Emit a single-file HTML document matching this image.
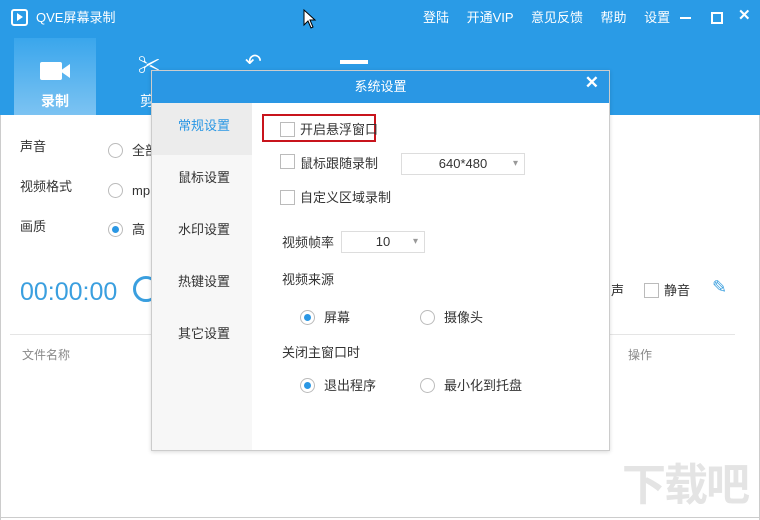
<html style="overflow:hidden"><head><style>
body{margin:0;width:760px;height:520px;overflow:hidden;font-family:"Liberation Sans","Noto Sans CJK SC",sans-serif;background:#fff;position:relative;font-size:13px;color:#333;line-height:16px}
.a{position:absolute;white-space:nowrap}
.cb{position:absolute;width:13px;height:13px;border:1px solid #bbb;background:#fff}
.rd{position:absolute;width:13px;height:13px;border:1px solid #bbb;border-radius:50%;background:#fff}
.rd.on::after{content:"";position:absolute;left:3px;top:3px;width:7px;height:7px;border-radius:50%;background:#2a97e4}
.sel{position:absolute;border:1px solid #ddd;background:#fff;height:20px;line-height:20px;text-align:center}
.sel::after{content:"▾";position:absolute;right:6px;top:0;color:#999;font-size:10px}
</style></head><body>
<div class="a" style="left:0;top:0;width:760px;height:115px;background:#2a9be6"></div>
<div class="a" style="left:14px;top:38px;width:82px;height:77px;background:linear-gradient(#3aa6ec,#7cc3f2)"></div>
<div class="a" style="left:11px;top:9px;width:13px;height:13px;border:2px solid #fff;border-radius:3px"></div>
<div class="a" style="left:17px;top:13px;width:0;height:0;border-left:6px solid #fff;border-top:4px solid transparent;border-bottom:4px solid transparent"></div>
<div class="a" style="left:36px;top:10px;color:#fff;font-size:13px">QVE屏幕录制</div>
<div class="a" style="left:423px;top:10px;color:#fff;font-size:13px;word-spacing:14px">登陆 开通VIP 意见反馈 帮助 设置</div>
<div class="a" style="left:680px;top:17px;width:11px;height:2px;background:#fff"></div>
<div class="a" style="left:711px;top:12px;width:8px;height:8px;border:2px solid #fff"></div>
<div class="a" style="left:738px;top:8px;color:#fff;font-size:15px;font-weight:bold">✕</div>
<div class="a" style="left:40px;top:62px;width:22px;height:18px;background:#fff;border-radius:2px"></div>
<div class="a" style="left:60px;top:64px;width:0;height:0;border-right:10px solid #fff;border-top:7px solid transparent;border-bottom:7px solid transparent"></div>
<div class="a" style="left:41px;top:93px;color:#fff;font-size:14px;font-weight:bold">录制</div>
<div class="a" style="left:138px;top:58px;color:#fff;font-size:22px">✂</div>
<div class="a" style="left:140px;top:93px;color:#fff;font-size:14px">剪</div>
<div class="a" style="left:245px;top:54px;color:#fff;font-size:20px">↶</div>
<div class="a" style="left:340px;top:60px;width:28px;height:4px;background:#fff"></div>
<div class="a" style="left:20px;top:139px">声音</div><div class="rd a" style="left:108px;top:143px"></div><div class="a" style="left:132px;top:143px">全部</div>
<div class="a" style="left:20px;top:179px">视频格式</div><div class="rd a" style="left:108px;top:183px"></div><div class="a" style="left:132px;top:183px">mp</div>
<div class="a" style="left:20px;top:219px">画质</div><div class="rd on a" style="left:108px;top:222px"></div><div class="a" style="left:132px;top:222px">高</div>
<div class="a" style="left:20px;top:278px;font-size:25px;line-height:28px;color:#3a9fdf">00:00:00</div>
<div class="a" style="left:133px;top:276px;width:20px;height:20px;border:3px solid #3a9fdf;border-radius:50%"></div>
<div class="a" style="left:611px;top:283px">声</div><div class="cb" style="left:644px;top:283px"></div><div class="a" style="left:664px;top:283px">静音</div>
<div class="a" style="left:712px;top:277px;color:#3a9fdf;font-size:18px;line-height:20px">✎</div>
<div class="a" style="left:10px;top:334px;width:725px;height:1px;background:#e5e5e5"></div>
<div class="a" style="left:22px;top:347px;color:#888;font-size:12px">文件名称</div>
<div class="a" style="left:628px;top:347px;color:#888;font-size:12px">操作</div>
<div class="a" style="left:0;top:115px;width:1px;height:405px;background:#ccc"></div>
<div class="a" style="left:759px;top:115px;width:1px;height:405px;background:#ccc"></div>
<div class="a" style="left:0;top:517px;width:760px;height:1px;background:#ccc"></div>
<div class="a" style="left:622px;top:458px;font-size:44px;line-height:56px;color:#e4e4e4;font-weight:bold;letter-spacing:-2px">下载吧</div>
<div class="a" style="left:151px;top:70px;width:457px;height:379px;background:#fff;border:1px solid #ccc;box-shadow:0 1px 4px rgba(0,0,0,.15)">
<div class="a" style="left:0;top:0;width:457px;height:32px;background:#2a97e4;color:#fff;text-align:center;line-height:32px;font-size:13px">系统设置</div>
<div class="a" style="right:10px;top:4px;color:#fff;font-size:17px;font-weight:bold">✕</div>
<div class="a" style="left:0;top:32px;width:100px;height:347px;background:#f7f7f7"></div>
<div class="a" style="left:0;top:32px;width:100px;height:52px;background:#ececec"></div>
<div class="a" style="left:26px;top:47px;color:#2a97e4">常规设置</div>
<div class="a" style="left:26px;top:99px">鼠标设置</div>
<div class="a" style="left:26px;top:151px">水印设置</div>
<div class="a" style="left:26px;top:203px">热键设置</div>
<div class="a" style="left:26px;top:255px">其它设置</div>
<div class="a" style="left:110px;top:43px;width:114px;height:28px;border:2px solid #c8141c;box-sizing:border-box"></div>
<div class="cb" style="left:128px;top:51px"></div><div class="a" style="left:148px;top:51px">开启悬浮窗口</div>
<div class="cb" style="left:128px;top:83px"></div><div class="a" style="left:148px;top:85px">鼠标跟随录制</div>
<div class="sel" style="left:249px;top:82px;width:122px">640*480</div>
<div class="cb" style="left:128px;top:119px"></div><div class="a" style="left:148px;top:119px">自定义区域录制</div>
<div class="a" style="left:130px;top:164px">视频帧率</div>
<div class="sel" style="left:189px;top:160px;width:82px">10</div>
<div class="a" style="left:130px;top:201px">视频来源</div>
<div class="rd on a" style="left:148px;top:239px"></div><div class="a" style="left:172px;top:239px">屏幕</div>
<div class="rd a" style="left:268px;top:239px"></div><div class="a" style="left:292px;top:239px">摄像头</div>
<div class="a" style="left:130px;top:274px">关闭主窗口时</div>
<div class="rd on a" style="left:148px;top:307px"></div><div class="a" style="left:172px;top:307px">退出程序</div>
<div class="rd a" style="left:268px;top:307px"></div><div class="a" style="left:292px;top:307px">最小化到托盘</div>
</div>
<svg class="a" style="left:303px;top:9px" width="14" height="20"><polygon points="1,1 1,16 5,12 8,19 10,18 7,11 12,11" fill="#fff" stroke="#000" stroke-width="1"/></svg>
</body></html>
